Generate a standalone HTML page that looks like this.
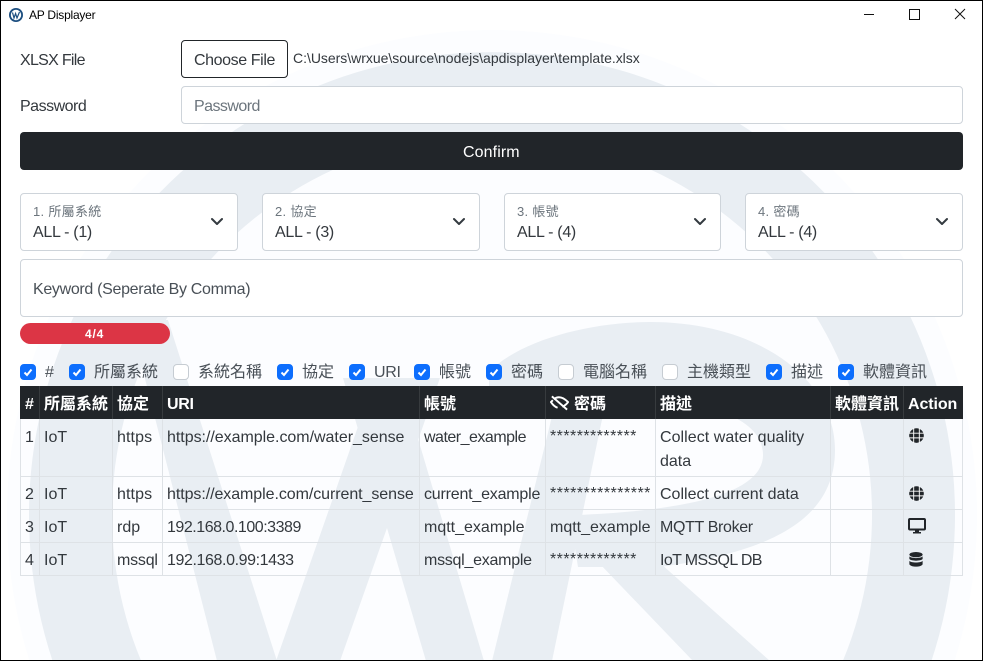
<!DOCTYPE html>
<html><head><meta charset="utf-8"><title>AP Displayer</title>
<style>
html,body{margin:0;padding:0;width:983px;height:661px;overflow:hidden;background:#fff}
#w{position:absolute;left:0;top:0;width:983px;height:661px;overflow:hidden;contain:strict;font-family:"Liberation Sans","Noto Sans CJK TC",sans-serif;font-size:16px;color:#33383d}
.t{position:absolute;line-height:20px;white-space:nowrap;transform:translateY(2px)}
.t.n{transform:none}
.b{position:absolute;box-sizing:border-box;border:1px solid #ced4da;border-radius:4px;background:#fff}
.t.g{color:#6c757d;font-size:13px;letter-spacing:.3px;transform:translateY(1px)}
.cb{position:absolute;top:364px;width:16px;height:16px;box-sizing:border-box;border-radius:4px;border:1px solid #c6ccd2;background:#fff}
.cb.on{background:#0d6efd;border-color:#0d6efd}
.cb svg{position:absolute;left:-1px;top:-1px}
.l{color:#495057}
.v{position:absolute;width:1px;background:#dee2e6;top:419px;height:157px}
.h{position:absolute;height:1px;background:#dee2e6;left:20px;width:943px}
.hv{position:absolute;width:1px;background:#373b3e;top:386px;height:33px}
.th{color:#fff;font-weight:700;top:393px}
.ic{position:absolute}
</style></head><body><div id="w">
<svg style="position:absolute;left:0;top:0" width="983" height="661">
<path d="M29.5 661A485 485 0 1 1 954.5 661Z" fill="#fcfdff"/>
<g fill="#e9eef3">
<path d="M52.6 661A463 463 0 1 1 931.4 661L842.8 661A380 380 0 1 0 141.2 661Z"/>
<polygon points="130,320 168,320 277,661 217,661"/>
<polygon points="276,661 340,661 440,378 375,378"/>
<polygon points="343,378 400,378 484,661 426,661"/>
<polygon points="492,661 552,661 606,400 556,400"/>
<polygon points="599,563 660,563 770,661 693,661"/>
<path fill-rule="evenodd" d="M489 372C520 340 590 322 650 322C760 322 835 380 835 450C835 520 770 552 660 567L578 567L554 420L489 400ZM606 405C680 395 763 410 763 455C763 490 700 510 576 515Z"/>
</g>
</svg>

<div style="position:absolute;left:0;top:0;width:983px;height:661px;box-sizing:border-box;border:1px solid #000;z-index:5"></div>

<svg class="ic" style="left:8px;top:7px" width="16" height="16" viewBox="0 0 16 16"><circle cx="8" cy="8" r="7" fill="#1d4f80"/><circle cx="8" cy="8" r="5.2" fill="#fff"/><path d="M4.5 5.5L6 11L7.6 6.5L9 11L11.5 5" fill="none" stroke="#1d4f80" stroke-width="1.2"/></svg>
<span class="t n" style="left:29px;top:5px;font-size:12px;color:#000;letter-spacing:-.23px">AP Displayer</span>
<svg class="ic" style="left:860px;top:5px" width="110" height="20" fill="none" stroke="#111"><path d="M4 9.5H14"/><rect x="49.5" y="4.5" width="10" height="10"/><path d="M95 4L105 14M105 4L95 14"/></svg>

<span class="t" style="left:20px;top:49px;letter-spacing:-.7px">XLSX File</span>
<div class="b" style="left:181px;top:40px;width:107px;height:38px;border-color:#212529"></div>
<span class="t" style="left:194px;top:49px;letter-spacing:-.4px">Choose File</span>
<span class="t n" style="left:293px;top:48px;font-size:14px;letter-spacing:-.02px">C:\Users\wrxue\source\nodejs\apdisplayer\template.xlsx</span>

<span class="t" style="left:20px;top:95px;letter-spacing:-.5px">Password</span>
<div class="b" style="left:181px;top:86px;width:782px;height:38px"></div>
<span class="t" style="left:194px;top:95px;color:#6c757d;letter-spacing:-.55px">Password</span>

<div style="position:absolute;left:20px;top:132px;width:943px;height:38px;background:#212529;border-radius:4px"></div>
<span class="t" style="left:463px;top:141px;color:#fff;letter-spacing:.1px">Confirm</span>

<div class="b" style="left:20px;top:193px;width:218px;height:58px"></div>
<div class="b" style="left:262px;top:193px;width:218px;height:58px"></div>
<div class="b" style="left:504px;top:193px;width:217px;height:58px"></div>
<div class="b" style="left:745px;top:193px;width:218px;height:58px"></div>
<span class="t g" style="left:33px;top:201px">1. 所屬系統</span><span class="t" style="left:33px;top:221px;letter-spacing:-.3px">ALL - (1)</span>
<span class="t g" style="left:275px;top:201px">2. 協定</span><span class="t" style="left:275px;top:221px;letter-spacing:-.3px">ALL - (3)</span>
<span class="t g" style="left:517px;top:201px">3. 帳號</span><span class="t" style="left:517px;top:221px;letter-spacing:-.3px">ALL - (4)</span>
<span class="t g" style="left:758px;top:201px">4. 密碼</span><span class="t" style="left:758px;top:221px;letter-spacing:-.3px">ALL - (4)</span>
<svg class="ic" style="left:0;top:215px" width="983" height="14" fill="none" stroke="#343a40" stroke-width="2" stroke-linecap="round" stroke-linejoin="round"><path d="M212 4L217 9L222 4M454 4L459 9L464 4M695 4L700 9L705 4M937 4L942 9L947 4"/></svg>

<div class="b" style="left:20px;top:259px;width:943px;height:58px"></div>
<span class="t" style="left:33px;top:278px;color:#495057;letter-spacing:-.32px">Keyword (Seperate By Comma)</span>

<div style="position:absolute;left:20px;top:323px;width:150px;height:21px;background:#dc3545;border-radius:11px"></div>
<span class="t n" style="left:85px;top:324px;font-size:12px;font-weight:700;color:#fff;letter-spacing:.8px">4/4</span>

<div class="cb on" style="left:20px"><svg width="16" height="16" viewBox="0 0 16 16"><path d="M4.5 8.5L7 11L11.5 5.5" fill="none" stroke="#fff" stroke-width="2"/></svg></div>
<div class="cb on" style="left:69px"><svg width="16" height="16" viewBox="0 0 16 16"><path d="M4.5 8.5L7 11L11.5 5.5" fill="none" stroke="#fff" stroke-width="2"/></svg></div>
<div class="cb" style="left:173px"></div>
<div class="cb on" style="left:277px"><svg width="16" height="16" viewBox="0 0 16 16"><path d="M4.5 8.5L7 11L11.5 5.5" fill="none" stroke="#fff" stroke-width="2"/></svg></div>
<div class="cb on" style="left:349px"><svg width="16" height="16" viewBox="0 0 16 16"><path d="M4.5 8.5L7 11L11.5 5.5" fill="none" stroke="#fff" stroke-width="2"/></svg></div>
<div class="cb on" style="left:414px"><svg width="16" height="16" viewBox="0 0 16 16"><path d="M4.5 8.5L7 11L11.5 5.5" fill="none" stroke="#fff" stroke-width="2"/></svg></div>
<div class="cb on" style="left:486px"><svg width="16" height="16" viewBox="0 0 16 16"><path d="M4.5 8.5L7 11L11.5 5.5" fill="none" stroke="#fff" stroke-width="2"/></svg></div>
<div class="cb" style="left:558px"></div>
<div class="cb" style="left:662px"></div>
<div class="cb on" style="left:766px"><svg width="16" height="16" viewBox="0 0 16 16"><path d="M4.5 8.5L7 11L11.5 5.5" fill="none" stroke="#fff" stroke-width="2"/></svg></div>
<div class="cb on" style="left:838px"><svg width="16" height="16" viewBox="0 0 16 16"><path d="M4.5 8.5L7 11L11.5 5.5" fill="none" stroke="#fff" stroke-width="2"/></svg></div>
<span class="t l" style="left:45px;top:361px">#</span>
<span class="t l" style="left:94px;top:361px">所屬系統</span>
<span class="t l" style="left:198px;top:361px">系統名稱</span>
<span class="t l" style="left:302px;top:361px">協定</span>
<span class="t l" style="left:374px;top:361px;letter-spacing:-.3px">URI</span>
<span class="t l" style="left:439px;top:361px">帳號</span>
<span class="t l" style="left:511px;top:361px">密碼</span>
<span class="t l" style="left:583px;top:361px">電腦名稱</span>
<span class="t l" style="left:687px;top:361px">主機類型</span>
<span class="t l" style="left:791px;top:361px">描述</span>
<span class="t l" style="left:863px;top:361px">軟體資訊</span>

<div style="position:absolute;left:20px;top:386px;width:943px;height:33px;background:#212529"></div>
<div class="hv" style="left:39px"></div><div class="hv" style="left:112px"></div><div class="hv" style="left:162px"></div><div class="hv" style="left:419px"></div><div class="hv" style="left:545px"></div><div class="hv" style="left:655px"></div><div class="hv" style="left:830px"></div><div class="hv" style="left:903px"></div>
<div class="v" style="left:20px"></div><div class="v" style="left:39px"></div><div class="v" style="left:112px"></div><div class="v" style="left:162px"></div><div class="v" style="left:419px"></div><div class="v" style="left:545px"></div><div class="v" style="left:655px"></div><div class="v" style="left:830px"></div><div class="v" style="left:903px"></div><div class="v" style="left:962px"></div>
<div class="h" style="top:476px"></div><div class="h" style="top:509px"></div><div class="h" style="top:542px"></div><div class="h" style="top:575px"></div>

<span class="t th" style="left:25px">#</span>
<span class="t th" style="left:44px">所屬系統</span>
<span class="t th" style="left:117px">協定</span>
<span class="t th" style="left:167px;letter-spacing:-.3px">URI</span>
<span class="t th" style="left:424px">帳號</span>
<svg class="ic" style="left:550px;top:395px" width="19" height="16" viewBox="0 0 20 16" fill="none" stroke="#fff" stroke-width="2"><path d="M2 1L18 15"/><path d="M4 4C9 0 14 2 19 7C17 10 15 11 13 12M8 13C5 12 3 10 1 7L3 5"/></svg>
<span class="t th" style="left:574px">密碼</span>
<span class="t th" style="left:660px">描述</span>
<span class="t th" style="left:835px">軟體資訊</span>
<span class="t th" style="left:908px;letter-spacing:-.1px">Action</span>

<span class="t" style="left:25px;top:426px">1</span><span class="t" style="left:44px;top:426px">IoT</span><span class="t" style="left:117px;top:426px;letter-spacing:.1px">https</span><span class="t" style="left:167px;top:426px;letter-spacing:-.03px">https://example.com/water_sense</span><span class="t" style="left:424px;top:426px;letter-spacing:-.5px">water_example</span><span class="t" style="left:550px;top:425px;letter-spacing:.45px">*************</span><span class="t" style="left:660px;top:426px;letter-spacing:.05px">Collect water quality</span><span class="t" style="left:660px;top:450px">data</span>
<span class="t" style="left:25px;top:483px">2</span><span class="t" style="left:44px;top:483px">IoT</span><span class="t" style="left:117px;top:483px;letter-spacing:.1px">https</span><span class="t" style="left:167px;top:483px;letter-spacing:-.07px">https://example.com/current_sense</span><span class="t" style="left:424px;top:483px;letter-spacing:-.2px">current_example</span><span class="t" style="left:550px;top:482px;letter-spacing:.5px">***************</span><span class="t" style="left:660px;top:483px">Collect current data</span>
<span class="t" style="left:25px;top:516px">3</span><span class="t" style="left:44px;top:516px">IoT</span><span class="t" style="left:117px;top:516px">rdp</span><span class="t" style="left:167px;top:516px;letter-spacing:-.47px">192.168.0.100:3389</span><span class="t" style="left:424px;top:516px">mqtt_example</span><span class="t" style="left:550px;top:516px">mqtt_example</span><span class="t" style="left:660px;top:516px;letter-spacing:-.35px">MQTT Broker</span>
<span class="t" style="left:25px;top:549px">4</span><span class="t" style="left:44px;top:549px">IoT</span><span class="t" style="left:117px;top:549px;letter-spacing:-.2px">mssql</span><span class="t" style="left:167px;top:549px;letter-spacing:-.4px">192.168.0.99:1433</span><span class="t" style="left:424px;top:549px;letter-spacing:-.26px">mssql_example</span><span class="t" style="left:550px;top:548px;letter-spacing:.45px">*************</span><span class="t" style="left:660px;top:549px;letter-spacing:-.63px">IoT MSSQL DB</span>

<svg class="ic" style="left:909px;top:428px" width="15" height="15" viewBox="0 0 16 16"><circle cx="8" cy="8" r="7.8" fill="#212529"/><path d="M0 5.5H16M0 10.5H16M5 0V16M11 0V16" stroke="#fff" stroke-width="1"/></svg>
<svg class="ic" style="left:909px;top:486px" width="15" height="15" viewBox="0 0 16 16"><circle cx="8" cy="8" r="7.8" fill="#212529"/><path d="M0 5.5H16M0 10.5H16M5 0V16M11 0V16" stroke="#fff" stroke-width="1"/></svg>
<svg class="ic" style="left:908px;top:518px" width="18" height="16" viewBox="0 0 18 16"><rect x="1" y="1" width="16" height="10.5" rx="1" fill="none" stroke="#212529" stroke-width="2"/><path d="M7 12H11V14H13V15.5H5V14H7Z" fill="#212529"/></svg>
<svg class="ic" style="left:909px;top:552px" width="14" height="15" viewBox="0 0 15 17" fill="#212529"><ellipse cx="7.5" cy="3" rx="7.5" ry="3"/><path d="M0 5C2 7.5 13 7.5 15 5V8C13 10.5 2 10.5 0 8Z"/><path d="M0 10C2 12.5 13 12.5 15 10V14C13 17.5 2 17.5 0 14Z"/></svg>
</div></body></html>
